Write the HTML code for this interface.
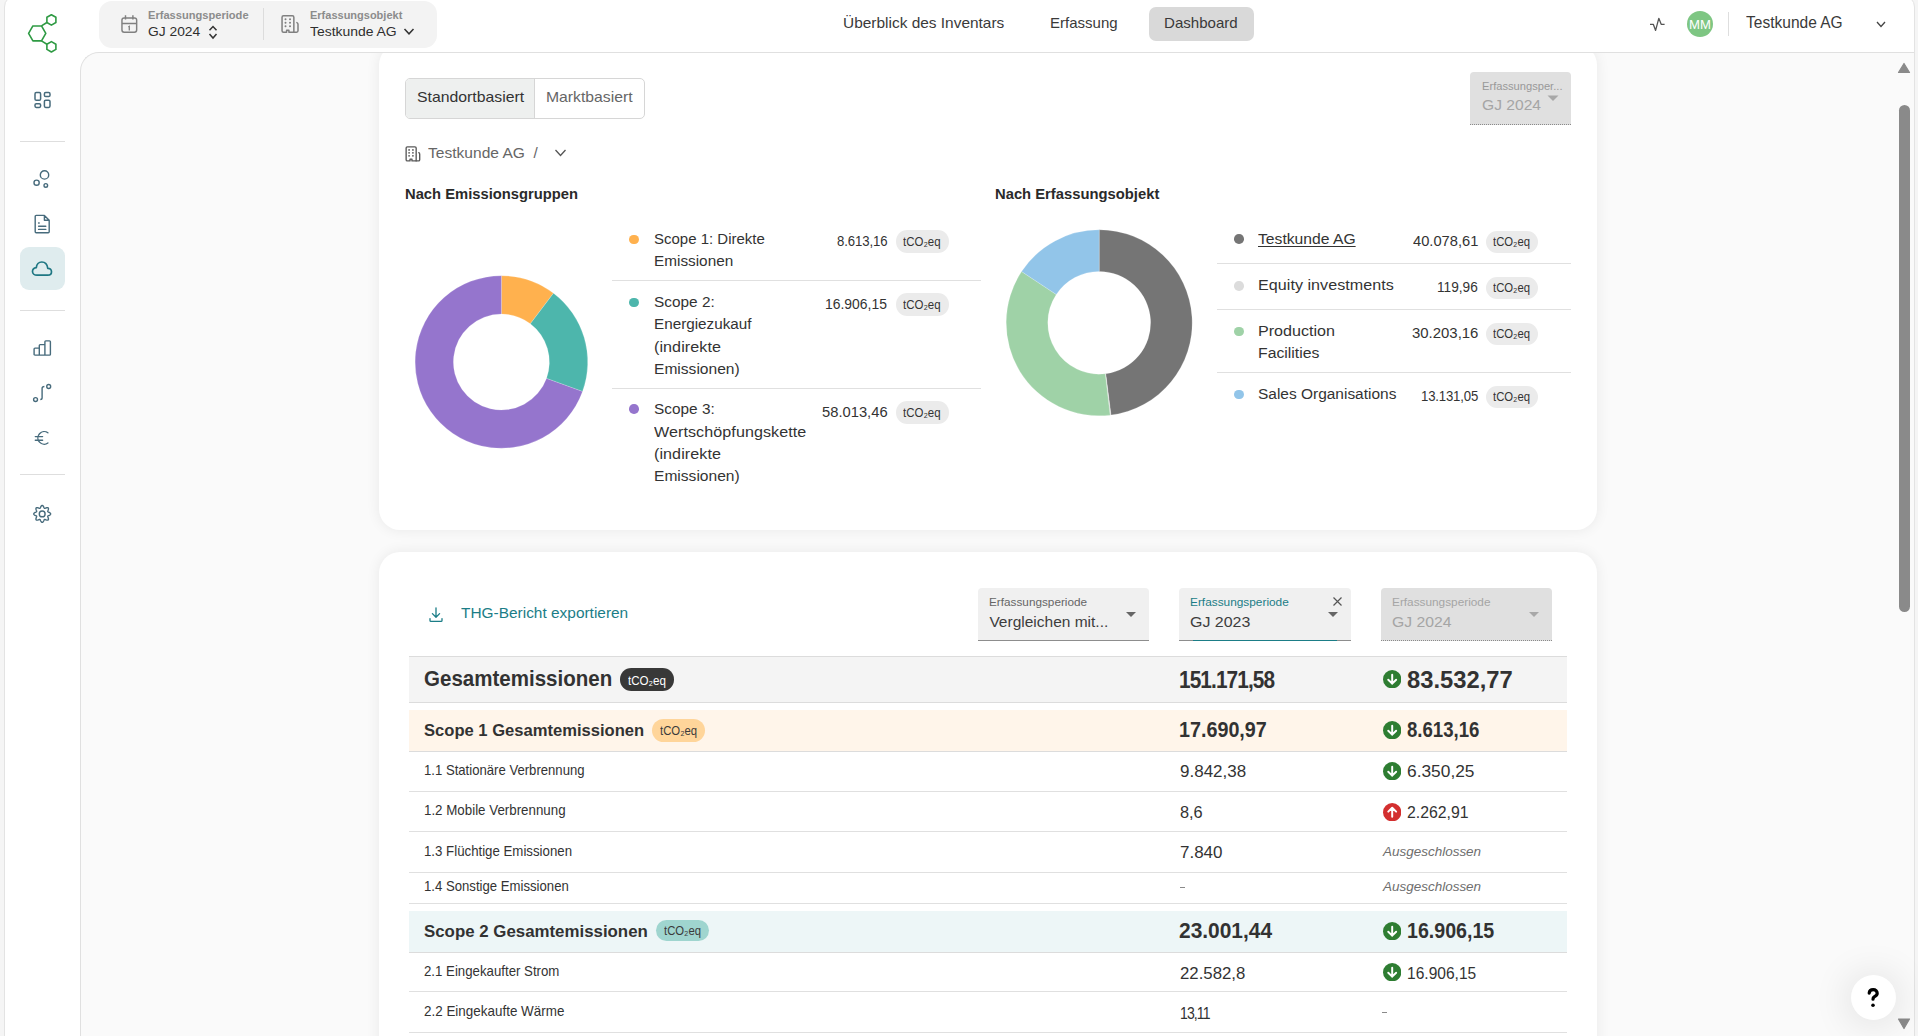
<!DOCTYPE html><html><head><meta charset="utf-8"><title>Dashboard</title><style>
*{box-sizing:border-box}
html,body{margin:0;padding:0}
body{width:1918px;height:1036px;overflow:hidden;position:relative;background:#f5f5f5;font-family:"Liberation Sans",sans-serif;color:#333}
.t{position:absolute;white-space:nowrap;line-height:1}
.panel{position:absolute;left:4px;top:-5px;width:1911px;height:1060px;background:#fff;border:1px solid #e3e3e3;border-radius:12px}
.main{position:absolute;left:80px;top:52px;width:1834px;height:1000px;background:#fafafa;border-top:1px solid #e0e0e0;border-left:1px solid #e0e0e0;border-top-left-radius:19px;overflow:hidden}
.clip{position:absolute;left:81px;top:53px;width:1833px;height:983px;overflow:hidden}
.inner{position:absolute;left:-81px;top:-53px;width:1918px;height:1036px}
.card{position:absolute;background:#fff;border-radius:21px;box-shadow:0 0 14px rgba(0,0,0,0.075)}
</style></head><body>
<div class="panel"></div>
<div class="main"></div>
<div style="position:absolute;left:99px;top:1px;width:338px;height:47px;border-radius:13px;background:#f3f3f3"></div>
<div style="position:absolute;left:263px;top:8px;width:1px;height:32px;background:#dcdcdc"></div>
<svg style="position:absolute;left:119px;top:13px" width="20" height="22" viewBox="0 0 20 22" fill="none" stroke="#808080" stroke-width="1.45">
<rect x="2.95" y="4.9" width="14.7" height="14.4" rx="2.2"/><path d="M2.95 10.4 H17.65 M6.5 2.2 V6.6 M13.9 2.2 V6.6"/><path d="M9.3 14 L10.3 13.4 V17.6" stroke-width="1.3"/></svg>
<div class="t" style="left:147.60px;top:9.00px;font-size:11.75px;color:#8c8c8c;font-weight:700;transform:scaleX(0.9450);transform-origin:0.00px 0;">Erfassungsperiode</div>
<div class="t" style="left:147.60px;top:26.00px;font-size:12.75px;color:#2f2f2f;transform:scaleX(1.0830);transform-origin:0.00px 0;">GJ 2024</div>
<svg style="position:absolute;left:207px;top:24px" width="12" height="16" fill="none" stroke="#333" stroke-width="1.5"><path d="M2.5 6.3 L6 2.5 L9.5 6.3 M2.5 10 L6 14 L9.5 10"/></svg>
<svg style="position:absolute;left:276px;top:10px" width="28" height="28" viewBox="0 0 28 28" fill="none" stroke="#808080" stroke-width="1.5" stroke-linejoin="round" stroke-linecap="round">
<path d="M10.6 22.25 H7.5 Q6.05 22.25 6.05 20.8 V7.2 Q6.05 5.75 7.5 5.75 H16.4 Q17.85 5.75 17.85 7.2 V22.25 H12.9 M10.6 22.25 V20.2 H12.9 V22.25"/>
<path d="M17.85 22.25 H20.6 Q22 22.25 22 20.85 V14.3 Q22 13.1 20.9 12.6"/>
<path d="M9.5 9.3h.05 M14 9.3h.05 M9.5 12.7h.05 M14 12.7h.05 M9.5 16.2h.05 M14 16.2h.05" stroke-width="1.9500000000000002"/></svg>
<div class="t" style="left:309.50px;top:9.00px;font-size:11.75px;color:#8c8c8c;font-weight:700;transform:scaleX(0.9361);transform-origin:0.00px 0;">Erfassungsobjekt</div>
<div class="t" style="left:309.50px;top:26.00px;font-size:12.75px;color:#2f2f2f;transform:scaleX(1.0919);transform-origin:0.00px 0;">Testkunde AG</div>
<svg style="position:absolute;left:402px;top:26px" width="14" height="12" fill="none" stroke="#333" stroke-width="1.5"><path d="M2.5 3 L7 7.8 L11.5 3"/></svg>
<div class="t" style="left:843.30px;top:16.00px;font-size:14.5px;color:#3a3a3a;transform:scaleX(1.0647);transform-origin:0.00px 0;">Überblick des Inventars</div>
<div class="t" style="left:1050.20px;top:16.00px;font-size:14.5px;color:#3a3a3a;transform:scaleX(1.0352);transform-origin:0.00px 0;">Erfassung</div>
<div style="position:absolute;left:1149px;top:7px;width:105px;height:34px;border-radius:7px;background:#d9d9d9"></div>
<div class="t" style="left:1164.00px;top:16.00px;font-size:14.5px;color:#3a3a3a;transform:scaleX(1.0388);transform-origin:0.00px 0;">Dashboard</div>
<svg style="position:absolute;left:1647px;top:14px" width="20" height="20" fill="none" stroke="#555" stroke-width="1.3" stroke-linejoin="round"><path d="M3 10.3 H6.3 L8.6 16.4 L11.8 4.3 L14.2 10.3 H17.6"/></svg>
<div style="position:absolute;left:1687px;top:10.8px;width:26px;height:26px;border-radius:50%;background:#7ec683"></div>
<div class="t" style="left:1689.00px;top:19.00px;font-size:12.25px;color:#ffffff;transform:scaleX(1.0735);transform-origin:0.00px 0;">MM</div>
<div style="position:absolute;left:1728px;top:12px;width:1px;height:24px;background:#dedede"></div>
<div class="t" style="left:1746.30px;top:14.00px;font-size:16.5px;color:#3a3a3a;transform:scaleX(0.9411);transform-origin:0.00px 0;">Testkunde AG</div>
<svg style="position:absolute;left:1874px;top:18px" width="14" height="12" fill="none" stroke="#444" stroke-width="1.3"><path d="M3 4 L7 8.5 L11 4"/></svg>
<svg style="position:absolute;left:0;top:0" width="80" height="70" fill="none" stroke="#2e9a43" stroke-width="1.6" stroke-linejoin="round">
<path d="M45.80 33.40 L41.50 40.85 L32.90 40.85 L28.60 33.40 L32.90 25.95 L41.50 25.95 Z"/><path d="M56.60 19.90 L54.00 24.40 L48.80 24.40 L46.20 19.90 L48.80 15.40 L54.00 15.40 Z" transform="rotate(30 51.4 19.9)"/><path d="M56.60 46.80 L54.00 51.30 L48.80 51.30 L46.20 46.80 L48.80 42.30 L54.00 42.30 Z" transform="rotate(30 51.4 46.8)"/>
<path d="M41.5 25.9 L46.9 22.5 M41.5 40.9 L46.9 44.2"/></svg>
<div style="position:absolute;left:20px;top:141px;width:45px;height:1px;background:#dedede"></div>
<div style="position:absolute;left:20px;top:310px;width:45px;height:1px;background:#dedede"></div>
<div style="position:absolute;left:20px;top:474px;width:45px;height:1px;background:#dedede"></div>
<svg style="position:absolute;left:30px;top:88px" width="24" height="24" fill="none" stroke="#476b7c" stroke-width="1.5">
<rect x="5" y="4.6" width="5.6" height="7.6" rx="1.3"/><rect x="14.4" y="4.6" width="5.6" height="4" rx="1.3"/><rect x="5" y="15.8" width="5.6" height="3.6" rx="1.3"/><rect x="14.4" y="12.2" width="5.6" height="7.2" rx="1.3"/></svg>
<svg style="position:absolute;left:30px;top:166px" width="24" height="24" fill="none" stroke="#476b7c" stroke-width="1.4">
<circle cx="14.5" cy="8.9" r="4.2"/><circle cx="6.6" cy="16.7" r="2.6"/><circle cx="15.8" cy="19.4" r="1.8"/></svg>
<svg style="position:absolute;left:30px;top:212px" width="24" height="24" fill="none" stroke="#476b7c" stroke-width="1.4" stroke-linejoin="round">
<path d="M6.2 3.4 H14.4 L19.2 8.2 V19.8 Q19.2 20.8 18.2 20.8 H6.2 Q5.2 20.8 5.2 19.8 V4.4 Q5.2 3.4 6.2 3.4 Z M14.4 3.4 V8.2 H19.2"/><path d="M8.6 11 H9.2 M8.6 14.2 H15.8 M8.6 17.4 H15.8" stroke-linecap="round"/></svg>
<div style="position:absolute;left:20px;top:247px;width:45px;height:43px;border-radius:9px;background:#dfecee"></div>
<svg style="position:absolute;left:30px;top:256px" width="24" height="24" fill="none" stroke="#1f7783" stroke-width="1.7" stroke-linejoin="round">
<path d="M7 19.2 H17.8 C20.2 19.2 21.5 17.6 21.5 15.7 C21.5 13.6 19.9 12.2 17.8 12.3 C17.3 8.4 14.9 6 11.8 6 C8.7 6 6.6 8.5 6.3 11.6 C4 11.9 2.5 13.5 2.5 15.5 C2.5 17.6 4.4 19.2 7 19.2 Z"/></svg>
<svg style="position:absolute;left:30px;top:336px" width="24" height="24" fill="none" stroke="#476b7c" stroke-width="1.4" stroke-linejoin="round">
<path d="M4.1 18.2 V13 Q4.1 12.1 5 12.1 H9.3 V19.1 H5 Q4.1 19.1 4.1 18.2 Z M9.3 19.1 V9.5 Q9.3 8.6 10.2 8.6 H14.9 V19.1 Z M14.9 19.1 V5.8 Q14.9 4.9 15.8 4.9 H19.5 Q20.4 4.9 20.4 5.8 V18.2 Q20.4 19.1 19.5 19.1 Z"/></svg>
<svg style="position:absolute;left:30px;top:381px" width="24" height="24" fill="none" stroke="#476b7c" stroke-width="1.4">
<circle cx="5.55" cy="18.6" r="1.95"/><circle cx="18.7" cy="5.5" r="1.95"/><path d="M10.3 18.5 Q12.1 18.5 12.1 16.7 V7.3 Q12.1 5.5 14.4 5.5"/></svg>
<svg style="position:absolute;left:30px;top:426px" width="24" height="24" fill="none" stroke="#476b7c" stroke-width="1.6" stroke-linecap="round">
<path d="M17.9 6.8 A6.3 6.3 0 1 0 17.9 17 M5.3 10.6 H12.6 M5.3 14.2 H12.6" stroke-width="1.4"/></svg>
<svg style="position:absolute;left:30px;top:502px" width="24" height="24" fill="none" stroke="#476b7c" stroke-width="1.4" stroke-linejoin="round">
<path d="M20.65 11.90 L20.58 12.23 L20.40 12.54 L20.10 12.84 L19.73 13.09 L19.31 13.31 L18.89 13.51 L18.50 13.68 L18.17 13.84 L17.93 14.01 L17.79 14.22 L17.75 14.46 L17.79 14.75 L17.91 15.10 L18.07 15.49 L18.23 15.93 L18.37 16.38 L18.45 16.83 L18.45 17.24 L18.36 17.60 L18.18 17.88 L17.90 18.06 L17.54 18.15 L17.13 18.15 L16.68 18.07 L16.23 17.93 L15.79 17.77 L15.40 17.61 L15.05 17.49 L14.76 17.45 L14.52 17.49 L14.31 17.63 L14.14 17.87 L13.98 18.20 L13.81 18.59 L13.61 19.01 L13.39 19.43 L13.14 19.80 L12.84 20.10 L12.53 20.28 L12.20 20.35 L11.87 20.28 L11.56 20.10 L11.26 19.80 L11.01 19.43 L10.79 19.01 L10.59 18.59 L10.42 18.20 L10.26 17.87 L10.09 17.63 L9.88 17.49 L9.64 17.45 L9.35 17.49 L9.00 17.61 L8.61 17.77 L8.17 17.93 L7.72 18.07 L7.27 18.15 L6.86 18.15 L6.50 18.06 L6.22 17.88 L6.04 17.60 L5.95 17.24 L5.95 16.83 L6.03 16.38 L6.17 15.93 L6.33 15.49 L6.49 15.10 L6.61 14.75 L6.65 14.46 L6.61 14.22 L6.47 14.01 L6.23 13.84 L5.90 13.68 L5.51 13.51 L5.09 13.31 L4.67 13.09 L4.30 12.84 L4.00 12.54 L3.82 12.23 L3.75 11.90 L3.82 11.57 L4.00 11.26 L4.30 10.96 L4.67 10.71 L5.09 10.49 L5.51 10.29 L5.90 10.12 L6.23 9.96 L6.47 9.79 L6.61 9.58 L6.65 9.34 L6.61 9.05 L6.49 8.70 L6.33 8.31 L6.17 7.87 L6.03 7.42 L5.95 6.97 L5.95 6.56 L6.04 6.20 L6.22 5.92 L6.50 5.74 L6.86 5.65 L7.27 5.65 L7.72 5.73 L8.17 5.87 L8.61 6.03 L9.00 6.19 L9.35 6.31 L9.64 6.35 L9.88 6.31 L10.09 6.17 L10.26 5.93 L10.42 5.60 L10.59 5.21 L10.79 4.79 L11.01 4.37 L11.26 4.00 L11.56 3.70 L11.87 3.52 L12.20 3.45 L12.53 3.52 L12.84 3.70 L13.14 4.00 L13.39 4.37 L13.61 4.79 L13.81 5.21 L13.98 5.60 L14.14 5.93 L14.31 6.17 L14.52 6.31 L14.76 6.35 L15.05 6.31 L15.40 6.19 L15.79 6.03 L16.23 5.87 L16.68 5.73 L17.13 5.65 L17.54 5.65 L17.90 5.74 L18.18 5.92 L18.36 6.20 L18.45 6.56 L18.45 6.97 L18.37 7.42 L18.23 7.87 L18.07 8.31 L17.91 8.70 L17.79 9.05 L17.75 9.34 L17.79 9.58 L17.93 9.79 L18.17 9.96 L18.50 10.12 L18.89 10.29 L19.31 10.49 L19.73 10.71 L20.10 10.96 L20.40 11.26 L20.58 11.57 Z"/><circle cx="12.2" cy="11.9" r="2.9"/></svg>
<div class="clip"><div class="inner">
<div class="card" style="left:379px;top:44px;width:1218px;height:486px"></div>
<div class="card" style="left:379px;top:552px;width:1218px;height:600px"></div>
<div style="position:absolute;left:405px;top:78px;width:240px;height:41px;border:1px solid #d6d6d6;border-radius:5px;overflow:hidden"><div style="position:absolute;left:0;top:0;width:129px;height:39px;background:#eef0ef;border-right:1px solid #d6d6d6"></div></div>
<div class="t" style="left:416.50px;top:90.00px;font-size:14.5px;color:#333;transform:scaleX(1.0890);transform-origin:0.00px 0;">Standortbasiert</div>
<div class="t" style="left:546.40px;top:90.00px;font-size:14.5px;color:#666;transform:scaleX(1.0846);transform-origin:0.00px 0;">Marktbasiert</div>
<svg style="position:absolute;left:400.7px;top:142px" width="23.8" height="23.8" viewBox="0 0 28 28" fill="none" stroke="#5a5a5a" stroke-width="1.6" stroke-linejoin="round" stroke-linecap="round">
<path d="M10.6 22.25 H7.5 Q6.05 22.25 6.05 20.8 V7.2 Q6.05 5.75 7.5 5.75 H16.4 Q17.85 5.75 17.85 7.2 V22.25 H12.9 M10.6 22.25 V20.2 H12.9 V22.25"/>
<path d="M17.85 22.25 H20.6 Q22 22.25 22 20.85 V14.3 Q22 13.1 20.9 12.6"/>
<path d="M9.5 9.3h.05 M14 9.3h.05 M9.5 12.7h.05 M14 12.7h.05 M9.5 16.2h.05 M14 16.2h.05" stroke-width="2.08"/></svg>
<div class="t" style="left:427.80px;top:145.00px;font-size:15.25px;color:#666;transform:scaleX(1.0205);transform-origin:0.00px 0;">Testkunde AG</div>
<div class="t" style="left:533.50px;top:145.00px;font-size:15.25px;color:#666;">/</div>
<svg style="position:absolute;left:553px;top:146px" width="15" height="13" fill="none" stroke="#555" stroke-width="1.3"><path d="M2.5 4 L7.5 9.5 L12.5 4"/></svg>
<div class="t" style="left:405.00px;top:186.00px;font-size:15.5px;color:#2a2a2a;font-weight:700;transform:scaleX(0.9519);transform-origin:0.00px 0;">Nach Emissionsgruppen</div>
<div class="t" style="left:995.40px;top:186.00px;font-size:15.5px;color:#2a2a2a;font-weight:700;transform:scaleX(0.9538);transform-origin:0.00px 0;">Nach Erfassungsobjekt</div>
<svg style="position:absolute;left:0;top:0" width="1918" height="1036"><path d="M501.40 275.70 A86.3 86.3 0 0 1 553.48 293.19 L530.37 323.73 A48 48 0 0 0 501.40 314.00 Z" fill="#ffb14e" stroke="#fff" stroke-width="0.3" stroke-opacity="0.6"/><path d="M553.48 293.19 A86.3 86.3 0 0 1 582.51 391.49 L546.51 378.40 A48 48 0 0 0 530.37 323.73 Z" fill="#4db6ac" stroke="#fff" stroke-width="0.3" stroke-opacity="0.6"/><path d="M582.51 391.49 A86.3 86.3 0 1 1 501.40 275.70 L501.40 314.00 A48 48 0 1 0 546.51 378.40 Z" fill="#9575cd" stroke="#fff" stroke-width="0.3" stroke-opacity="0.6"/><path d="M1099.20 229.80 A93 93 0 0 1 1110.97 415.05 L1105.71 373.79 A51.4 51.4 0 0 0 1099.20 271.40 Z" fill="#757575" stroke="#fff" stroke-width="0.3" stroke-opacity="0.6"/><path d="M1110.97 415.05 A93 93 0 0 1 1110.14 415.15 L1105.25 373.84 A51.4 51.4 0 0 0 1105.71 373.79 Z" fill="#d4d4d4" stroke="#fff" stroke-width="0.3" stroke-opacity="0.6"/><path d="M1110.14 415.15 A93 93 0 0 1 1021.57 271.59 L1056.29 294.50 A51.4 51.4 0 0 0 1105.25 373.84 Z" fill="#9fd2a7" stroke="#fff" stroke-width="0.3" stroke-opacity="0.6"/><path d="M1021.57 271.59 A93 93 0 0 1 1099.20 229.80 L1099.20 271.40 A51.4 51.4 0 0 0 1056.29 294.50 Z" fill="#92c5e9" stroke="#fff" stroke-width="0.3" stroke-opacity="0.6"/></svg>
<div style="position:absolute;left:629.4000000000001px;top:234.5px;width:9.6px;height:9.6px;border-radius:50%;background:#ffb14e"></div>
<div class="t" style="left:653.70px;top:232.00px;font-size:14.0px;color:#333;transform:scaleX(1.0705);transform-origin:0.00px 0;">Scope 1: Direkte</div>
<div class="t" style="left:653.70px;top:254.00px;font-size:14.0px;color:#333;transform:scaleX(1.0947);transform-origin:0.00px 0;">Emissionen</div>
<div class="t" style="left:836.60px;top:233.00px;font-size:15.5px;color:#333;transform:scaleX(0.8500);transform-origin:0.00px 0;letter-spacing:-0.100px;">8.613,16</div>
<div style="position:absolute;left:896.2px;top:230.3px;width:52.59999999999991px;height:22.5px;border-radius:11.25px;background:#ebebeb"></div>
<div class="t" style="left:903.30px;top:236.00px;font-size:12.5px;color:#333;transform:scaleX(0.9171);transform-origin:0.00px 0;">tCO₂eq</div>
<div style="position:absolute;left:612px;top:280.1px;width:369px;height:1px;background:#e0e0e0"></div>
<div style="position:absolute;left:629.4000000000001px;top:297.5px;width:9.6px;height:9.6px;border-radius:50%;background:#4db6ac"></div>
<div class="t" style="left:653.70px;top:295.00px;font-size:14.0px;color:#333;transform:scaleX(1.0986);transform-origin:0.00px 0;">Scope 2:</div>
<div class="t" style="left:653.70px;top:317.00px;font-size:14.0px;color:#333;transform:scaleX(1.0899);transform-origin:0.00px 0;">Energiezukauf</div>
<div class="t" style="left:653.70px;top:340.00px;font-size:14.0px;color:#333;transform:scaleX(1.1500);transform-origin:0.00px 0;letter-spacing:0.064px;">(indirekte</div>
<div class="t" style="left:653.70px;top:362.00px;font-size:14.0px;color:#333;transform:scaleX(1.1123);transform-origin:0.00px 0;">Emissionen)</div>
<div class="t" style="left:825.40px;top:296.00px;font-size:15.5px;color:#333;transform:scaleX(0.8978);transform-origin:0.00px 0;">16.906,15</div>
<div style="position:absolute;left:896.2px;top:293.3px;width:52.59999999999991px;height:22.5px;border-radius:11.25px;background:#ebebeb"></div>
<div class="t" style="left:903.30px;top:299.00px;font-size:12.5px;color:#333;transform:scaleX(0.9171);transform-origin:0.00px 0;">tCO₂eq</div>
<div style="position:absolute;left:612px;top:387.9px;width:369px;height:1px;background:#e0e0e0"></div>
<div style="position:absolute;left:629.4000000000001px;top:404.4px;width:9.6px;height:9.6px;border-radius:50%;background:#9575cd"></div>
<div class="t" style="left:653.70px;top:402.00px;font-size:14.0px;color:#333;transform:scaleX(1.0986);transform-origin:0.00px 0;">Scope 3:</div>
<div class="t" style="left:653.70px;top:425.00px;font-size:14.0px;color:#333;transform:scaleX(1.1500);transform-origin:0.00px 0;letter-spacing:0.066px;">Wertschöpfungskette</div>
<div class="t" style="left:653.70px;top:447.00px;font-size:14.0px;color:#333;transform:scaleX(1.1500);transform-origin:0.00px 0;letter-spacing:0.064px;">(indirekte</div>
<div class="t" style="left:653.70px;top:469.00px;font-size:14.0px;color:#333;transform:scaleX(1.1123);transform-origin:0.00px 0;">Emissionen)</div>
<div class="t" style="left:821.70px;top:404.00px;font-size:15.5px;color:#333;transform:scaleX(0.9514);transform-origin:0.00px 0;">58.013,46</div>
<div style="position:absolute;left:896.2px;top:401.3px;width:52.59999999999991px;height:22.5px;border-radius:11.25px;background:#ebebeb"></div>
<div class="t" style="left:903.30px;top:407.00px;font-size:12.5px;color:#333;transform:scaleX(0.9171);transform-origin:0.00px 0;">tCO₂eq</div>
<div style="position:absolute;left:1234.2px;top:234.2px;width:9.6px;height:9.6px;border-radius:50%;background:#757575"></div>
<div class="t" style="left:1258.00px;top:232.00px;font-size:14.0px;color:#333;transform:scaleX(1.1199);transform-origin:0.00px 0;text-decoration:underline;text-underline-offset:2px;">Testkunde AG</div>
<div class="t" style="left:1412.90px;top:233.00px;font-size:15.5px;color:#333;transform:scaleX(0.9471);transform-origin:0.00px 0;">40.078,61</div>
<div style="position:absolute;left:1486.2px;top:230.6px;width:52.09999999999991px;height:22.0px;border-radius:11.0px;background:#ebebeb"></div>
<div class="t" style="left:1493.30px;top:236.00px;font-size:12.5px;color:#333;transform:scaleX(0.9049);transform-origin:0.00px 0;">tCO₂eq</div>
<div style="position:absolute;left:1217px;top:263.1px;width:354px;height:1px;background:#e0e0e0"></div>
<div style="position:absolute;left:1234.2px;top:281.2px;width:9.6px;height:9.6px;border-radius:50%;background:#dcdcdc"></div>
<div class="t" style="left:1258.00px;top:278.00px;font-size:14.0px;color:#333;transform:scaleX(1.1500);transform-origin:0.00px 0;letter-spacing:0.035px;">Equity investments</div>
<div class="t" style="left:1437.40px;top:279.00px;font-size:15.5px;color:#333;transform:scaleX(0.8822);transform-origin:0.00px 0;">119,96</div>
<div style="position:absolute;left:1486.2px;top:276.6px;width:52.09999999999991px;height:22.0px;border-radius:11.0px;background:#ebebeb"></div>
<div class="t" style="left:1493.30px;top:282.00px;font-size:12.5px;color:#333;transform:scaleX(0.9049);transform-origin:0.00px 0;">tCO₂eq</div>
<div style="position:absolute;left:1217px;top:308.9px;width:354px;height:1px;background:#e0e0e0"></div>
<div style="position:absolute;left:1234.2px;top:326.8px;width:9.6px;height:9.6px;border-radius:50%;background:#9fd2a7"></div>
<div class="t" style="left:1258.00px;top:324.00px;font-size:14.0px;color:#333;transform:scaleX(1.1500);transform-origin:0.00px 0;">Production</div>
<div class="t" style="left:1258.00px;top:346.00px;font-size:14.0px;color:#333;transform:scaleX(1.1258);transform-origin:0.00px 0;">Facilities</div>
<div class="t" style="left:1411.80px;top:325.00px;font-size:15.5px;color:#333;transform:scaleX(0.9630);transform-origin:0.00px 0;">30.203,16</div>
<div style="position:absolute;left:1486.2px;top:322.6px;width:52.09999999999991px;height:22.0px;border-radius:11.0px;background:#ebebeb"></div>
<div class="t" style="left:1493.30px;top:328.00px;font-size:12.5px;color:#333;transform:scaleX(0.9049);transform-origin:0.00px 0;">tCO₂eq</div>
<div style="position:absolute;left:1217px;top:372.0px;width:354px;height:1px;background:#e0e0e0"></div>
<div style="position:absolute;left:1234.2px;top:389.8px;width:9.6px;height:9.6px;border-radius:50%;background:#92c5e9"></div>
<div class="t" style="left:1258.00px;top:387.00px;font-size:14.0px;color:#333;transform:scaleX(1.1045);transform-origin:0.00px 0;">Sales Organisations</div>
<div class="t" style="left:1421.00px;top:388.00px;font-size:15.5px;color:#333;transform:scaleX(0.8500);transform-origin:0.00px 0;letter-spacing:-0.207px;">13.131,05</div>
<div style="position:absolute;left:1486.2px;top:385.6px;width:52.09999999999991px;height:22.0px;border-radius:11.0px;background:#ebebeb"></div>
<div class="t" style="left:1493.30px;top:391.00px;font-size:12.5px;color:#333;transform:scaleX(0.9049);transform-origin:0.00px 0;">tCO₂eq</div>
<div style="position:absolute;left:1470px;top:72px;width:101px;height:53px;background:#e0e0e0;border-radius:4px 4px 0 0;border-bottom:1px dotted #8a8a8a"></div>
<div class="t" style="left:1481.50px;top:81.00px;font-size:11.5px;color:#999;transform:scaleX(0.9687);transform-origin:0.00px 0;">Erfassungsper...</div>
<div class="t" style="left:1481.50px;top:97.00px;font-size:15.5px;color:#a5a5a5;transform:scaleX(1.0068);transform-origin:0.00px 0;">GJ 2024</div>
<svg style="position:absolute;left:1546px;top:94px" width="14" height="8"><path d="M1.5 1.5 L12.5 1.5 L7 7 Z" fill="#a8a8a8"/></svg>
<svg style="position:absolute;left:426px;top:605px" width="20" height="20" fill="none" stroke="#1b7d87" stroke-width="1.3" stroke-linecap="round" stroke-linejoin="round">
<path d="M10 2.8 V12 M6.4 8.6 L10 12.2 L13.6 8.6 M4 13.6 V15.5 Q4 16.4 4.9 16.4 H15.1 Q16 16.4 16 15.5 V13.6"/></svg>
<div class="t" style="left:461.30px;top:605.00px;font-size:15.0px;color:#1b7d87;transform:scaleX(1.0286);transform-origin:0.00px 0;">THG-Bericht exportieren</div>
<div style="position:absolute;left:978.4px;top:588.4px;width:170.5000000000001px;height:52.3px;background:#f0f0f0;border-radius:4px 4px 0 0;border-bottom:1px solid #8d8d8d"></div>
<div class="t" style="left:989.40px;top:597.00px;font-size:11.5px;color:#666;transform:scaleX(1.0229);transform-origin:0.00px 0;">Erfassungsperiode</div>
<div class="t" style="left:989.40px;top:614.00px;font-size:15.5px;color:#3d3d3d;">Vergleichen mit...</div>
<svg style="position:absolute;left:1123.9px;top:610px" width="14" height="8"><path d="M2 2 L12 2 L7 7 Z" fill="#666"/></svg>
<div style="position:absolute;left:1178.9px;top:588.4px;width:171.79999999999995px;height:52.3px;background:#f0f0f0;border-radius:4px 4px 0 0;border-bottom:1px solid #8d8d8d"></div>
<div class="t" style="left:1189.90px;top:597.00px;font-size:11.5px;color:#1b7d87;transform:scaleX(1.0302);transform-origin:0.00px 0;">Erfassungsperiode</div>
<div class="t" style="left:1189.90px;top:614.00px;font-size:15.5px;color:#3d3d3d;transform:scaleX(1.0307);transform-origin:0.00px 0;">GJ 2023</div>
<svg style="position:absolute;left:1325.7px;top:610px" width="14" height="8"><path d="M2 2 L12 2 L7 7 Z" fill="#666"/></svg>
<div style="position:absolute;left:1193px;top:639.7px;width:144px;height:1.3px;background:#1b7d87"></div>
<svg style="position:absolute;left:1331px;top:595px" width="13" height="13" fill="none" stroke="#555" stroke-width="1.15"><path d="M2.5 2.5 L10.5 10.5 M10.5 2.5 L2.5 10.5"/></svg>
<div style="position:absolute;left:1381px;top:588.4px;width:171px;height:52.3px;background:#e0e0e0;border-radius:4px 4px 0 0;border-bottom:1px dotted #8a8a8a"></div>
<div class="t" style="left:1392.00px;top:597.00px;font-size:11.5px;color:#a5a5a5;transform:scaleX(1.0271);transform-origin:0.00px 0;">Erfassungsperiode</div>
<div class="t" style="left:1392.00px;top:614.00px;font-size:15.5px;color:#a5a5a5;transform:scaleX(1.0154);transform-origin:0.00px 0;">GJ 2024</div>
<svg style="position:absolute;left:1527px;top:610px" width="14" height="8"><path d="M2 2 L12 2 L7 7 Z" fill="#a8a8a8"/></svg>
<div style="position:absolute;left:409px;top:656px;width:1158px;height:46.5px;background:#f4f4f4;border-top:1px solid #dcdcdc;border-bottom:1px solid #dcdcdc"></div>
<div class="t" style="left:424.20px;top:668.00px;font-size:21.75px;color:#323232;font-weight:700;transform:scaleX(0.9436);transform-origin:0.00px 0;">Gesamtemissionen</div>
<div style="position:absolute;left:620.1px;top:668.1px;width:53.69999999999993px;height:22.600000000000023px;border-radius:11.300000000000011px;background:#383838"></div>
<div class="t" style="left:628.20px;top:674.00px;font-size:13.0px;color:#fff;transform:scaleX(0.8920);transform-origin:0.00px 0;">tCO₂eq</div>
<div class="t" style="left:1179.20px;top:668.00px;font-size:24.5px;color:#323232;font-weight:700;transform:scaleX(0.8500);transform-origin:0.00px 0;letter-spacing:-1.060px;">151.171,58</div>
<svg style="position:absolute;left:1383.0px;top:669.9px" width="18.4" height="18.4" viewBox="0 0 14 14"><circle cx="7" cy="7" r="7" fill="#2e7d32"/><path d="M7 3.6 V10.4 M4 7.4 L7 10.4 L10 7.4" fill="none" stroke="#fff" stroke-width="1.5" stroke-linecap="round" stroke-linejoin="round"/></svg>
<div class="t" style="left:1407.10px;top:668.00px;font-size:24.5px;color:#323232;font-weight:700;transform:scaleX(0.9706);transform-origin:0.00px 0;">83.532,77</div>
<div style="position:absolute;left:409px;top:710px;width:1158px;height:41.8px;background:#fff5ea;border-bottom:1px solid #dcdcdc"></div>
<div class="t" style="left:424.20px;top:722.00px;font-size:17.0px;color:#323232;font-weight:700;transform:scaleX(0.9752);transform-origin:0.00px 0;">Scope 1 Gesamtemissionen</div>
<div style="position:absolute;left:652.1px;top:719px;width:52.89999999999998px;height:23px;border-radius:11.5px;background:#ffd59a"></div>
<div class="t" style="left:659.70px;top:725.00px;font-size:12.5px;color:#3a3a3a;transform:scaleX(0.9073);transform-origin:0.00px 0;">tCO₂eq</div>
<div class="t" style="left:1179.20px;top:720.00px;font-size:21.5px;color:#323232;font-weight:700;transform:scaleX(0.9179);transform-origin:0.00px 0;">17.690,97</div>
<svg style="position:absolute;left:1383.0px;top:721.0px" width="18.4" height="18.4" viewBox="0 0 14 14"><circle cx="7" cy="7" r="7" fill="#2e7d32"/><path d="M7 3.6 V10.4 M4 7.4 L7 10.4 L10 7.4" fill="none" stroke="#fff" stroke-width="1.5" stroke-linecap="round" stroke-linejoin="round"/></svg>
<div class="t" style="left:1407.10px;top:720.00px;font-size:21.5px;color:#323232;font-weight:700;transform:scaleX(0.8650);transform-origin:0.00px 0;">8.613,16</div>
<div class="t" style="left:424.40px;top:764.00px;font-size:13.75px;color:#333;transform:scaleX(0.9548);transform-origin:0.00px 0;">1.1 Stationäre Verbrennung</div>
<div class="t" style="left:1180.00px;top:763.00px;font-size:16.5px;color:#333;transform:scaleX(1.0304);transform-origin:0.00px 0;">9.842,38</div>
<svg style="position:absolute;left:1383.0px;top:762.0px" width="18.4" height="18.4" viewBox="0 0 14 14"><circle cx="7" cy="7" r="7" fill="#2e7d32"/><path d="M7 3.6 V10.4 M4 7.4 L7 10.4 L10 7.4" fill="none" stroke="#fff" stroke-width="1.5" stroke-linecap="round" stroke-linejoin="round"/></svg>
<div class="t" style="left:1407.40px;top:763.00px;font-size:16.5px;color:#333;transform:scaleX(1.0506);transform-origin:0.00px 0;">6.350,25</div>
<div style="position:absolute;left:409px;top:791.0px;width:1158px;height:1px;background:#e0e0e0"></div>
<div class="t" style="left:424.40px;top:804.00px;font-size:13.75px;color:#333;transform:scaleX(0.9699);transform-origin:0.00px 0;">1.2 Mobile Verbrennung</div>
<div class="t" style="left:1180.00px;top:804.00px;font-size:16.5px;color:#333;transform:scaleX(0.9891);transform-origin:0.00px 0;">8,6</div>
<svg style="position:absolute;left:1383.0px;top:802.9px" width="18.4" height="18.4" viewBox="0 0 14 14"><circle cx="7" cy="7" r="7" fill="#d32f2f"/><path d="M7 3.6 V10.4 M4 6.6 L7 3.6 L10 6.6" fill="none" stroke="#fff" stroke-width="1.5" stroke-linecap="round" stroke-linejoin="round"/></svg>
<div class="t" style="left:1407.40px;top:804.00px;font-size:16.5px;color:#333;transform:scaleX(0.9588);transform-origin:0.00px 0;">2.262,91</div>
<div style="position:absolute;left:409px;top:831.0px;width:1158px;height:1px;background:#e0e0e0"></div>
<div class="t" style="left:424.40px;top:845.00px;font-size:13.75px;color:#333;transform:scaleX(0.9635);transform-origin:0.00px 0;">1.3 Flüchtige Emissionen</div>
<div class="t" style="left:1180.00px;top:844.00px;font-size:16.5px;color:#333;transform:scaleX(1.0291);transform-origin:0.00px 0;">7.840</div>
<div class="t" style="left:1382.70px;top:845.00px;font-size:13.25px;color:#6e6e6e;font-style:italic;transform:scaleX(1.0165);transform-origin:-0.70px 0;">Ausgeschlossen</div>
<div style="position:absolute;left:409px;top:871.5px;width:1158px;height:1px;background:#e0e0e0"></div>
<div class="t" style="left:424.40px;top:880.00px;font-size:13.75px;color:#333;transform:scaleX(0.9567);transform-origin:0.00px 0;">1.4 Sonstige Emissionen</div>
<div style="position:absolute;left:1180px;top:887.2px;width:5px;height:1.2px;background:#8a8a8a"></div>
<div class="t" style="left:1382.70px;top:880.00px;font-size:13.25px;color:#6e6e6e;font-style:italic;transform:scaleX(1.0165);transform-origin:-0.70px 0;">Ausgeschlossen</div>
<div style="position:absolute;left:409px;top:902.8px;width:1158px;height:1px;background:#e0e0e0"></div>
<div style="position:absolute;left:409px;top:911px;width:1158px;height:41.8px;background:#edf6f7;border-bottom:1px solid #dcdcdc"></div>
<div class="t" style="left:424.20px;top:923.00px;font-size:17.0px;color:#323232;font-weight:700;transform:scaleX(0.9911);transform-origin:0.00px 0;">Scope 2 Gesamtemissionen</div>
<div style="position:absolute;left:655.9px;top:919.8px;width:52.80000000000007px;height:21.600000000000023px;border-radius:10.800000000000011px;background:#9fd5cf"></div>
<div class="t" style="left:663.50px;top:925.00px;font-size:12.5px;color:#3a3a3a;transform:scaleX(0.9049);transform-origin:0.00px 0;">tCO₂eq</div>
<div class="t" style="left:1179.20px;top:921.00px;font-size:21.5px;color:#323232;font-weight:700;transform:scaleX(0.9733);transform-origin:0.00px 0;">23.001,44</div>
<svg style="position:absolute;left:1383.0px;top:921.5999999999999px" width="18.4" height="18.4" viewBox="0 0 14 14"><circle cx="7" cy="7" r="7" fill="#2e7d32"/><path d="M7 3.6 V10.4 M4 7.4 L7 10.4 L10 7.4" fill="none" stroke="#fff" stroke-width="1.5" stroke-linecap="round" stroke-linejoin="round"/></svg>
<div class="t" style="left:1407.10px;top:921.00px;font-size:21.5px;color:#323232;font-weight:700;transform:scaleX(0.9117);transform-origin:0.00px 0;">16.906,15</div>
<div class="t" style="left:424.40px;top:965.00px;font-size:13.75px;color:#333;transform:scaleX(0.9627);transform-origin:0.00px 0;">2.1 Eingekaufter Strom</div>
<div class="t" style="left:1180.00px;top:965.00px;font-size:16.5px;color:#333;transform:scaleX(1.0163);transform-origin:0.00px 0;">22.582,8</div>
<svg style="position:absolute;left:1383.0px;top:963.0999999999999px" width="18.4" height="18.4" viewBox="0 0 14 14"><circle cx="7" cy="7" r="7" fill="#2e7d32"/><path d="M7 3.6 V10.4 M4 7.4 L7 10.4 L10 7.4" fill="none" stroke="#fff" stroke-width="1.5" stroke-linecap="round" stroke-linejoin="round"/></svg>
<div class="t" style="left:1407.40px;top:965.00px;font-size:16.5px;color:#333;transform:scaleX(0.9428);transform-origin:0.00px 0;">16.906,15</div>
<div style="position:absolute;left:409px;top:991.3px;width:1158px;height:1px;background:#e0e0e0"></div>
<div class="t" style="left:424.40px;top:1005.00px;font-size:13.75px;color:#333;transform:scaleX(0.9770);transform-origin:0.00px 0;">2.2 Eingekaufte Wärme</div>
<div class="t" style="left:1180.00px;top:1005.00px;font-size:16.5px;color:#333;transform:scaleX(0.8500);transform-origin:0.00px 0;letter-spacing:-1.042px;">13,11</div>
<div style="position:absolute;left:1382px;top:1011.7px;width:5px;height:1.2px;background:#8a8a8a"></div>
<div style="position:absolute;left:409px;top:1031.6px;width:1158px;height:1px;background:#e0e0e0"></div>
</div></div>
<svg style="position:absolute;left:1896px;top:60px" width="16" height="16"><path d="M2.5 12.5 L8 3.5 L13.5 12.5 Z" fill="#8a8a8a" stroke="#8a8a8a" stroke-width="1.2" stroke-linejoin="round"/></svg>
<div style="position:absolute;left:1899px;top:105px;width:11px;height:507px;border-radius:6px;background:#8a8a8a"></div>
<svg style="position:absolute;left:1896px;top:1016px" width="16" height="16"><path d="M2.5 3 L8 12.5 L13.5 3 Z" fill="#8a8a8a" stroke="#8a8a8a" stroke-width="1.2" stroke-linejoin="round"/></svg>
<div style="position:absolute;left:1851px;top:975px;width:45px;height:45px;border-radius:50%;background:#fff;box-shadow:0 2px 40px rgba(0,0,0,0.14)"></div>
<svg style="position:absolute;left:1863px;top:986px" width="20" height="24" fill="none" stroke="#000" stroke-width="3.2" stroke-linecap="round"><path d="M6.2 7.2 C6.4 4.6 8.2 3.6 10.2 3.6 C12.6 3.6 14.2 5.1 14.2 7.2 C14.2 9.4 12.4 10.2 11.2 10.9 C10.4 11.4 10 12 10 13.2"/><circle cx="10" cy="19.2" r="1.8" fill="#000" stroke="none"/></svg>
</body></html>
